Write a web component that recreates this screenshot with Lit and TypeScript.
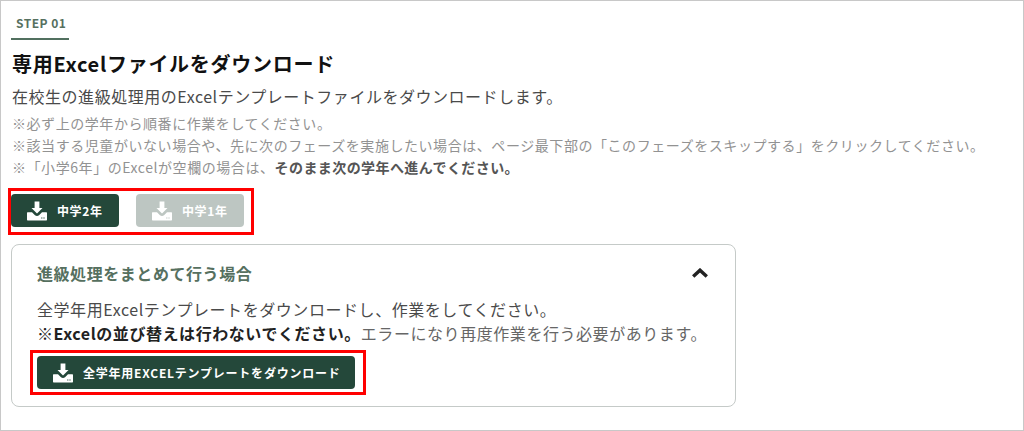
import { LitElement, html, css, svg } from "lit";
import { customElement } from "lit/decorators.js";

const icon = svg`<svg class="ic" viewBox="0 0 20 20" width="20" height="20" aria-hidden="true"><path fill="currentColor" d="M7.6 0.5h4.8v6.6h3.1L10 12.6 4.5 7.1h3.1z"/><path fill="currentColor" fill-rule="evenodd" d="M0.6 11.2h4.4l3 3c1.1 1.1 2.9 1.1 4 0l3-3h4.4c.3 0 .6.3.6.6v7c0 .3-.3.6-.6.6H0.6c-.3 0-.6-.3-.6-.6v-7c0-.3.3-.6.6-.6zM14.2 16.4h1.2v1h-1.2zM16.4 16.4h1.2v1h-1.2z"/></svg>`;

@customElement("app-root")
export class AppRoot extends LitElement {
  static styles = css`
    :host {
      display: block;
      box-sizing: border-box;
      width: 1024px;
      height: 431px;
      border: 1px solid #c8c8c8;
      padding: 12px 10px 0 10px;
      font-family: "Noto Sans CJK JP", "Noto Sans", sans-serif;
      color: #333;
      background: #fff;
      letter-spacing: 0.02em;
      overflow: hidden;
    }
    * { box-sizing: border-box; }
    .step {
      width: 58px;
      height: 27px;
      border-bottom: 2px solid #51705f;
      padding-left: 5px;
      font-size: 12px;
      line-height: 20px;
      font-weight: 700;
      color: #56705f;
      letter-spacing: 0.04em;
    }
    h2 {
      margin: 9px 0 0;
      padding-left: 1px;
      font-size: 20px;
      line-height: 30px;
      font-weight: 700;
      color: #111;
      letter-spacing: 0.036em;
    }
    .lead { margin: 5px 0 0; padding-left: 1px; font-size: 16px; line-height: 24px; color: #4a4a4a; letter-spacing: 0.033em; }
    .notes { margin: 4px 0 0; padding-left: 1px; font-size: 14px; line-height: 22px; color: #929292; letter-spacing: 0.04em; }
    .notes b { color: #555; font-weight: 700; letter-spacing: 0.03em; }
    .mark {
      border: 3px solid #f00;
      display: inline-flex;
    }
    .group {
      margin: 10px 0 0 -3px;
      width: 246px;
      height: 47px;
      padding: 3px 0 0 0;
      gap: 17px;
    }
    .btn {
      display: flex;
      align-items: center;
      height: 33px;
      border-radius: 4px;
      background: #24483a;
      color: #fff;
      font-size: 12px;
      font-weight: 700;
      white-space: nowrap;
      letter-spacing: 0.05em;
    }
    .btn.y { width: 108px; padding-left: 16px; gap: 10px; }
    .btn.off { background: #bdc6c2; }
    .ic { flex: none; }
    .panel {
      margin-top: 9px;
      width: 725px;
      height: 163px;
      border: 1px solid #c5cac8;
      border-radius: 8px;
      padding: 14px 25px 0;
    }
    .head {
      display: flex;
      justify-content: space-between;
      align-items: center;
      height: 28px;
    }
    .head span { font-size: 16px; font-weight: 700; color: #56705f; letter-spacing: 0.035em; }
    .chev { margin-right: 2px; }
    .body { margin: 10px 0 0; font-size: 16px; line-height: 24px; color: #4a4a4a; letter-spacing: 0.035em; }
    .body b { color: #222; font-weight: 700; }
    .body .g { color: #666; }
    .group2 {
      margin: 5px 0 0 -7px;
      width: 336px;
      height: 45px;
      padding: 3px 0 0 4px;
    }
    .btn.all { width: 318px; padding-left: 16px; gap: 10px; letter-spacing: 0.065em; }
  `;

  render() {
    return html`
      <div class="step">STEP 01</div>
      <h2>専用Excelファイルをダウンロード</h2>
      <p class="lead">在校生の進級処理用のExcelテンプレートファイルをダウンロードします。</p>
      <p class="notes">
        ※必ず上の学年から順番に作業をしてください。<br />
        ※該当する児童がいない場合や、先に次のフェーズを実施したい場合は、ページ最下部の「このフェーズをスキップする」をクリックしてください。<br />
        ※「小学6年」のExcelが空欄の場合は、<b>そのまま次の学年へ進んでください。</b>
      </p>
      <div class="mark group">
        <div class="btn y">${icon}<span>中学2年</span></div>
        <div class="btn y off">${icon}<span>中学1年</span></div>
      </div>
      <section class="panel">
        <div class="head">
          <span>進級処理をまとめて行う場合</span>
          <svg class="chev" viewBox="0 0 16 10" width="16" height="10" aria-hidden="true"><path d="M1.2 8.6 8 2.2l6.8 6.4" fill="none" stroke="#222" stroke-width="3.4"/></svg>
        </div>
        <p class="body">
          全学年用Excelテンプレートをダウンロードし、作業をしてください。<br />
          <b>※Excelの並び替えは行わないでください。</b><span class="g">エラーになり再度作業を行う必要があります。</span>
        </p>
        <div class="mark group2">
          <div class="btn all">${icon}<span>全学年用EXCELテンプレートをダウンロード</span></div>
        </div>
      </section>
    `;
  }
}
